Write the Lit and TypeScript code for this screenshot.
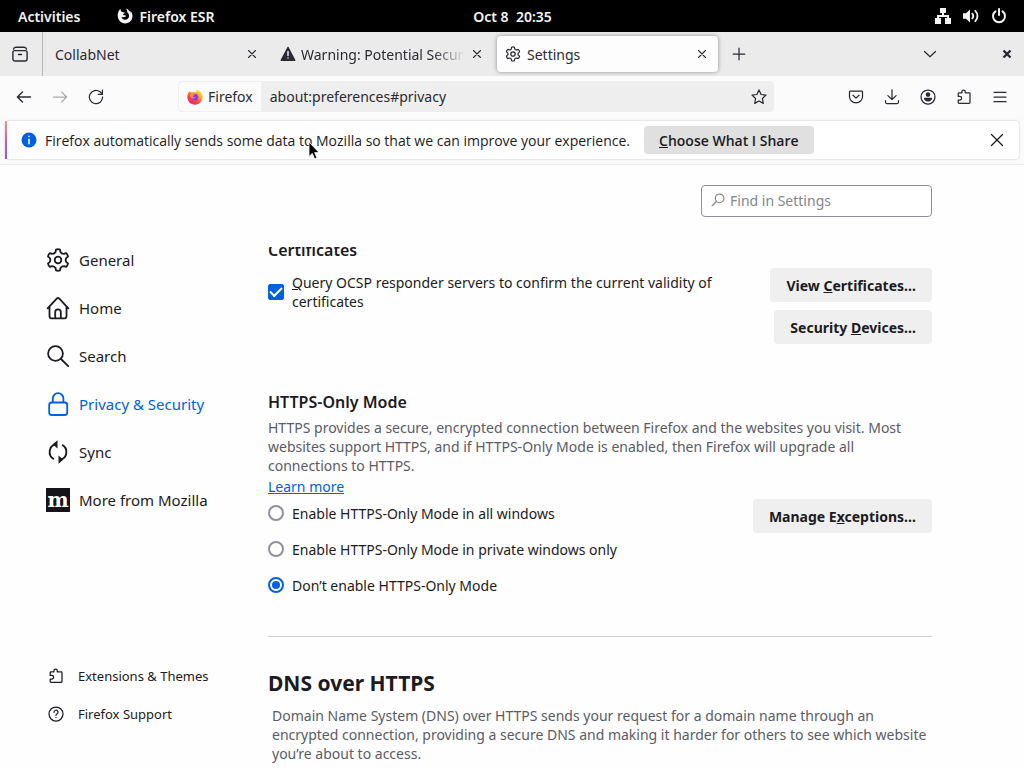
import { LitElement, html, css, svg } from "lit";
import { customElement, state } from "lit/decorators.js";

/* Outline of a six-tooth gear centred on (c, c). */
function gearPath(c: number, tip: number, root: number): string {
  const at = (deg: number, r: number) => {
    const a = (deg * Math.PI) / 180;
    return `${(c + r * Math.cos(a)).toFixed(2)} ${(c + r * Math.sin(a)).toFixed(2)}`;
  };
  let d = "";
  for (let k = 0; k < 6; k++) {
    const a = -90 + 60 * k;
    d += `${k === 0 ? "M" : "L"}${at(a - 16, root + 0.6)}L${at(a - 11, tip)}Q${at(a, tip + 0.6)} ${at(a + 11, tip)}L${at(a + 16, root + 0.6)}Q${at(a + 30, root - 1)} ${at(a + 44, root + 0.6)}`;
  }
  return d + "Z";
}

const svg16 = (body: unknown, size = 16) => html`<svg class="icon" width=${size} height=${size} viewBox="0 0 16 16" fill="none" stroke="currentColor" stroke-width="1.25" stroke-linecap="round" stroke-linejoin="round" aria-hidden="true">${body}</svg>`;
const svg24 = (body: unknown) => html`<svg class="icon" width="24" height="24" viewBox="0 0 24 24" fill="none" stroke="currentColor" stroke-width="1.8" stroke-linecap="round" stroke-linejoin="round" aria-hidden="true">${body}</svg>`;

const puzzle = svg`<path d="M2.200 7V4.600c0-.5.3-.8.8-.8h2.900V2.700a1.700 1.700 0 0 1 3.400 0v1.100h3.900c.5 0 .8.3.8.8v9c0 .5-.3.8-.8.8H3c-.5 0-.8-.3-.8-.8v-2.600h1.600a1.700 1.700 0 0 0 0-3.600H2.200"/>`;

const icons = {
  firefoxMono: svg16(svg`<path fill="currentColor" stroke="none" d="M3.300 1C1.500 2.600.6 4.900.7 7.700.900 12 4 15.400 8.200 15.400c4.200 0 7.300-3.300 7.300-7.400 0-2.500-1-4.400-2.400-5.600.5 1 .6 1.700.5 2.300C12.600 2.600 10.700 1.200 9 .6c1 1.300 1.300 2.300 1.200 3.700 1.300 1 2 2.300 1.800 4-.2 2.200-1.900 3.600-4 3.500-2-.1-3.400-1.500-3.500-3.100.8.7 1.800.8 2.700.3.7-.4 1.200-.5 1.700-.6.3-.5-.2-1.100-1-1.200C6.700 7.300 6 6.900 6.200 6.200c.2-.6 1.500-.8 1.600-1.600C6.900 4.300 6 4.200 4.900 4 4 3.200 3.500 2.200 3.300 1z"/>`),
  firefox: html`<svg class="icon" width="16" height="16" viewBox="0 0 16 16" aria-hidden="true">
    <defs>
      <linearGradient id="flame" x1="0.85" y1="0.05" x2="0.2" y2="0.95"><stop offset="0" stop-color="#fff04a"/><stop offset="0.35" stop-color="#ffa52e"/><stop offset="0.65" stop-color="#ff4b3a"/><stop offset="1" stop-color="#e8187c"/></linearGradient>
      <radialGradient id="globe"><stop offset="0" stop-color="#6a3df0"/><stop offset="1" stop-color="#a83ad8"/></radialGradient>
    </defs>
    <path fill="url(#flame)" d="M2.600 2.200C1.200 3.600.4 5.600.4 8c0 4.300 3.400 7.700 7.600 7.700s7.600-3.400 7.600-7.700c0-2.400-1-4.400-2.500-5.600C12 1.500 10.600.8 9.300.3c.4 1.300.1 2.100-.8 2.900C7 2.800 5.900 3 5 3.500 4 3.300 3.100 2.900 2.600 2.200z"/>
    <circle cx="7.900" cy="8.200" r="3.500" fill="url(#globe)"/>
    <path fill="#ff9a2e" d="M3 5.300c1.500-.9 3.200-.6 4.600.5-.2.900-1.700.9-1.900 1.700.5 1 1.900 1 3.200.5-.6 1.300-2.600 2-4.300 1C3.400 8.200 2.900 6.800 3 5.300z"/></svg>`,
  network: svg16(svg`<g fill="currentColor" stroke="none"><path d="M5 0h6v5H9v2h5v3h2v6h-6v-6h2V9H4v1h2v6H0v-6h2V7h5V5H5z"/></g>`),
  volume: svg16(svg`<path fill="currentColor" stroke="none" d="M0 5.200h3L7 1.400v13.200L3 10.800H0z"/><path stroke-width="1.800" d="M9.300 5.600c1.200 1.400 1.200 3.400 0 4.800M12.300 2.800c2.900 3 2.900 7.400 0 10.400"/>`),
  power: svg16(svg`<path stroke-width="2" d="M8 1v6M4.500 3.400a6 6 0 1 0 7 0"/>`),
  view: svg16(svg`<path stroke-width="1.400" d="M3.800 1.200h8.400c1.200 0 2 .8 2.200 2M3.800 1.200c-1.200 0-2 .8-2.200 2"/><rect x="0.900" y="4.600" width="14.200" height="10.400" rx="2" stroke-width="1.400"/><path d="M6.500 8.400h3" stroke-width="1.500"/>`),
  warning: svg16(svg`<path fill="currentColor" d="M8 1.500l6.700 12.800H1.300z" stroke-width="1.500"/><path stroke="#ebebeb" stroke-width="1.500" d="M8 5.500v4M8 12v.1"/>`),
  gear: svg16(svg`<path d="${gearPath(8, 6.9, 5.2)}"/><circle cx="8" cy="8" r="2.200"/>`),
  close: svg16(svg`<path d="M4 4l8 8M12 4l-8 8"/>`, 14),
  closeLarge: svg16(svg`<path d="M2.500 2.500l11 11M13.500 2.500l-11 11"/>`),
  closeWindow: svg16(svg`<path stroke-width="2.400" stroke-linecap="butt" d="M4.500 4.500l7 7M11.500 4.500l-7 7"/>`),
  plus: svg16(svg`<path d="M8 2.200v11.600M2.200 8h11.600"/>`),
  chevron: svg16(svg`<path d="M2.500 5.500L8 10.700l5.500-5.200"/>`),
  back: svg16(svg`<path stroke-width="1.400" d="M14.500 8h-13M6.500 2.900L1.400 8l5.100 5.100"/>`),
  forward: svg16(svg`<path d="M1.500 8h13M9.500 2.900L14.600 8l-5.100 5.100"/>`),
  reload: svg16(svg`<path d="M14.600 8A6.600 6.600 0 1 1 12 2.800l2.300 2.100M14.400 1.200V5.300H10.300"/>`),
  star: svg16(svg`<path d="M8 1l2.100 4.500 4.900.6-3.600 3.400.9 4.900L8 12l-4.300 2.400.9-4.900L1 6.100l4.900-.6z"/>`),
  pocket: svg16(svg`<path d="M2.500 2h11c.6 0 1 .4 1 1v4.600a6.500 6.300 0 0 1-13 0V3c0-.6.4-1 1-1zM5 6.200l3 2.900 3-2.900"/>`),
  download: svg16(svg`<path d="M8 .8v9.600M3.900 6.600L8 10.500l4.100-3.900M1.500 11.500v1.600c0 .9.600 1.500 1.500 1.500h10c.9 0 1.500-.6 1.500-1.500v-1.600"/>`),
  account: svg16(svg`<circle cx="8" cy="8" r="7"/><circle cx="8" cy="5.600" r="2.300" fill="currentColor" stroke="none"/><path fill="currentColor" stroke="none" d="M3.800 8.800h8.400c0 2.200-1.900 3.800-4.200 3.800S3.800 11 3.800 8.800z"/>`),
  puzzle: svg16(puzzle),
  menu: svg16(svg`<path d="M2 3.300h12M2 8h12M2 12.700h12"/>`),
  info: html`<svg class="icon" width="16" height="16" viewBox="0 0 16 16" aria-hidden="true"><circle cx="8" cy="8" r="7.500" fill="#0560df"/><path d="M8 7.300v4.500M8 4.300v.2" stroke="#fff" stroke-width="1.500" stroke-linecap="round"/></svg>`,
  find: svg16(svg`<circle cx="9.600" cy="6.300" r="4.300"/><path d="M6.400 9.500L2.200 13.700"/>`),
  gearLarge: svg24(svg`<path d="${gearPath(12, 10.6, 8)}"/><circle cx="12" cy="12" r="3.300"/>`),
  home: svg24(svg`<path d="M1.600 12.400L10.700 2.600c.7-.8 1.900-.8 2.600 0l9.100 9.800M3.500 10.800v9.400c0 1.200.9 2.100 2.100 2.100h12.800c1.200 0 2.100-.9 2.100-2.100v-9.400M9.200 22v-5.800a2.800 2.800 0 0 1 5.600 0V22"/>`),
  search: svg24(svg`<circle cx="9.500" cy="9.500" r="7.400"/><path d="M15 15l7.200 7.200"/>`),
  lock: svg24(svg`<rect x="3.200" y="10.500" width="18" height="12.500" rx="2.500"/><path d="M6.800 10.300V6.500a5.300 5.300 0 0 1 10.600 0v3.800"/>`),
  sync: svg24(svg`<path stroke-width="1.900" stroke-linecap="butt" d="M7.800 19.200A8.200 8.200 0 0 1 9.500 4.200M16.200 4.800A8.200 8.200 0 0 1 14.500 19.800"/><path fill="currentColor" stroke="none" d="M11.500.2v8.200L6.700 4.300zM12.500 15.600v8.200l4.800-4.100z"/>`),
  help: svg16(svg`<circle cx="8" cy="8" r="7"/><path d="M6 6.300a2 2 0 1 1 2.900 1.700c-.6.3-.9.700-.9 1.300M8 11.500v.1"/>`),
};

@customElement("app-root")
export class AppRoot extends LitElement {
  @state() private httpsMode = "off";

  static styles = css`
    :host {
      display: flex;
      flex-direction: column;
      height: 100vh;
      overflow: hidden;
      background: #fefefe;
      color: #1c1b22;
      font: 14px/19px "Noto Sans", "Open Sans", sans-serif;
    }
    * { box-sizing: border-box; }
    .icon { display: block; flex: none; }
    button, input { font: inherit; color: inherit; margin: 0; }
    button { border: 0; padding: 0; background: none; }
    a { color: inherit; text-decoration: none; }
    h1, h2, p { margin: 0; }

    .shell { display: grid; grid-template-columns: 1fr auto 1fr; align-items: center; height: 32px; padding: 0 17px 0 18px; background: #000; color: #f4f4f4; font-weight: 600; }
    .shell-left, .shell-right { display: flex; align-items: center; }
    .shell-left { gap: 37px; }
    .shell-right { justify-content: flex-end; gap: 12px; }
    .shell-app { display: flex; align-items: center; gap: 6px; }

    .tabs { display: flex; align-items: center; height: 44px; background: #ebebeb; padding-right: 9px; color: #2b2a33; }
    .view { display: flex; align-items: center; justify-content: center; width: 43px; height: 44px; border-right: 1px solid #b8b8b8; padding-right: 2px; margin-right: 1px; }
    .tab { display: flex; align-items: center; gap: 6px; flex: 0 1 225px; min-width: 0; height: 36px; padding: 0 10px 0 11px; }
    .tab.active { padding: 0 9px 0 8px; margin-left: 3px; flex-basis: 221px; border-radius: 4px; background: #fdfdfd; box-shadow: 0 0 4px rgba(0, 0, 0, 0.4); }
    .tab-title { flex: 1; min-width: 0; overflow: hidden; white-space: nowrap; }
    .tab-title.faded { -webkit-mask-image: linear-gradient(to left, transparent, #000 32px); mask-image: linear-gradient(to left, transparent, #000 32px); }
    .tab.overfull { gap: 5px; }
    .new-tab { margin-left: 13px; }
    .grow { flex: 1; }
    .tab-menu { margin-right: 61px; }

    .toolbar { display: flex; align-items: center; height: 41px; padding: 0 6px; background: #fbfbfb; color: #2b2a33; }
    .tool { display: flex; align-items: center; justify-content: center; width: 36px; height: 32px; }
    .tool.off { color: #aaa; }
    .urlbar { display: flex; align-items: center; flex: 1; min-width: 0; height: 31px; margin: 0 64px; border-radius: 4px; background: #eee; padding-right: 7px; }
    .identity { display: flex; align-items: center; gap: 5px; height: 31px; padding: 0 8px; border: 1px solid #f0f0f0; border-radius: 4px 0 0 4px; background: #fbfbfb; }
    .url { flex: 1; min-width: 0; border: 0; outline: 0; background: none; padding: 0 8px; }

    .notice-row { padding: 4px 5px 5px; background: #fafafa; border-bottom: 1px solid #e8e8e8; font-family: "Open Sans", "Noto Sans", sans-serif; }
    .notice { display: flex; align-items: center; height: 38px; padding: 0 14px; border-radius: 4px; background: #fff; box-shadow: 0 0 2px rgba(0, 0, 0, 0.25); border-left: 2px solid; border-image: linear-gradient(#f29a7c, #d25fa8, #9059c8) 1; }
    .notice p { margin: 0 14px 0 8px; white-space: nowrap; }
    .notice button { flex: none; }
    .share { height: 28px; padding: 0 15px; border-radius: 4px; background: #e0e0e0; font-weight: 600; }

    .page { display: grid; grid-template-columns: 222px minmax(0, 664px); column-gap: 46px; flex: 1; min-height: 0; }
    .side { display: flex; flex-direction: column; justify-content: space-between; padding: 71px 0 35px 46px; }
    .side nav { display: flex; flex-direction: column; }
    .cat { display: flex; align-items: center; gap: 9px; height: 48px; font-size: 15px; white-space: nowrap; }
    .cat.current { color: #0061e0; }
    .moz { display: flex; justify-content: center; width: 24px; height: 24px; background: #15141a; color: #fff; font: 700 20px/24px "DejaVu Serif", serif; }
    .side-link { display: flex; align-items: center; gap: 14px; height: 38px; padding-left: 2px; font-size: 13px; white-space: nowrap; }

    .pane { display: flex; flex-direction: column; min-height: 0; }
    .find-row { display: flex; justify-content: flex-end; padding: 20px 0 30px; }
    .find { display: flex; align-items: center; gap: 4px; width: 231px; height: 32px; padding: 0 8px 2px; border: 1px solid #8f8f9d; border-radius: 4px; background: #fff; color: #8a8a92; }
    .find input { flex: 1; min-width: 0; border: 0; outline: 0; padding: 0; background: none; }
    .find input::placeholder { color: #85858c; opacity: 1; }
    .scroll { flex: 1; min-height: 0; overflow: hidden; }
    .first { margin-top: -9px; }
    h2 { font-size: 16px; line-height: 24px; font-weight: 600; }
    .row { display: flex; justify-content: space-between; gap: 32px; }
    .certs { padding-top: 6px; }
    .check { display: flex; align-items: center; gap: 8px; width: 464px; height: 48px; }
    .check input, .radio input { appearance: none; flex: none; width: 16px; height: 16px; display: grid; place-items: center; }
    .check input { border: 1px solid #8f8f9d; border-radius: 2px; }
    .check input:checked { border-color: #0061e0; background: #0061e0; }
    .check input:checked::after { content: ""; width: 10px; height: 5px; margin-top: -4px; border: solid #fff; border-width: 0 0 2px 2px; transform: rotate(-45deg); }
    .stack { display: flex; flex-direction: column; align-items: flex-end; gap: 8px; }
    .btn { height: 34px; padding: 0 16px; border-radius: 4px; background: #efefef; font-weight: 700; white-space: nowrap; }
    .https { margin-top: 46px; }
    .note { color: #5b5b66; }
    .https .note { padding-top: 4px; }
    .learn { display: inline-block; margin-top: 2px; color: #0061e0; text-decoration: underline; }
    .modes { align-items: flex-start; padding-top: 3px; }
    .radios { display: flex; flex-direction: column; }
    .radio { display: flex; align-items: center; gap: 8px; height: 36px; }
    .radio:first-child { height: 28px; margin-bottom: 4px; }
    .radio input { border: 2px solid #8f8f9d; border-radius: 50%; background: #fff; }
    .radio input:checked { border-color: #0061e0; }
    .radio input:checked::after { content: ""; width: 8px; height: 8px; border-radius: 50%; background: #0061e0; }
    .dns { margin-top: 33px; border-top: 1px solid #cfcfd4; padding-top: 30px; }
    h1 { font-size: 21px; line-height: 32px; font-weight: 700; }
    .dns .note { padding: 7px 0 0 4px; }
    .pointer { position: absolute; left: 308px; top: 141px; }
  `;

  private mode(value: string, label: string) {
    return html`<label class="radio"><input type="radio" name="https" .checked=${this.httpsMode === value} @change=${() => (this.httpsMode = value)} />${label}</label>`;
  }

  render() {
    return html`
      <header class="shell">
        <div class="shell-left"><span>Activities</span><span class="shell-app">${icons.firefoxMono}Firefox ESR</span></div>
        <span>Oct 8&nbsp; 20:35</span>
        <div class="shell-right">${icons.network}${icons.volume}${icons.power}</div>
      </header>

      <div class="tabs">
        <button class="view" aria-label="Firefox View">${icons.view}</button>
        <div class="tab"><span class="tab-title">CollabNet</span><button aria-label="Close tab">${icons.close}</button></div>
        <div class="tab overfull">${icons.warning}<span class="tab-title faded">Warning: Potential Security</span><button aria-label="Close tab">${icons.close}</button></div>
        <div class="tab active">${icons.gear}<span class="tab-title">Settings</span><button aria-label="Close tab">${icons.close}</button></div>
        <button class="new-tab" aria-label="New tab">${icons.plus}</button>
        <span class="grow"></span>
        <button class="tab-menu" aria-label="List all tabs">${icons.chevron}</button>
        <button aria-label="Close window">${icons.closeWindow}</button>
      </div>

      <div class="toolbar">
        <button class="tool" aria-label="Back">${icons.back}</button>
        <button class="tool off" aria-label="Forward" disabled>${icons.forward}</button>
        <button class="tool" aria-label="Reload">${icons.reload}</button>
        <div class="urlbar">
          <span class="identity">${icons.firefox}Firefox</span>
          <input class="url" type="text" aria-label="Address" .value=${"about:preferences#privacy"} />
          <button aria-label="Bookmark this page">${icons.star}</button>
        </div>
        <button class="tool" aria-label="Save to Pocket">${icons.pocket}</button>
        <button class="tool" aria-label="Downloads">${icons.download}</button>
        <button class="tool" aria-label="Account">${icons.account}</button>
        <button class="tool" aria-label="Extensions">${icons.puzzle}</button>
        <button class="tool" aria-label="Menu">${icons.menu}</button>
      </div>

      <div class="notice-row">
        <div class="notice">
          ${icons.info}
          <p>Firefox automatically sends some data to Mozilla so that we can improve your experience.</p>
          <button class="share"><u>C</u>hoose What I Share</button>
          <span class="grow"></span>
          <button aria-label="Dismiss">${icons.closeLarge}</button>
        </div>
      </div>

      <main class="page">
        <aside class="side">
          <nav>
            <a class="cat" href="#general">${icons.gearLarge}General</a>
            <a class="cat" href="#home">${icons.home}Home</a>
            <a class="cat" href="#search">${icons.search}Search</a>
            <a class="cat current" href="#privacy">${icons.lock}Privacy &amp; Security</a>
            <a class="cat" href="#sync">${icons.sync}Sync</a>
            <a class="cat" href="#more"><span class="moz" aria-hidden="true">m</span>More from Mozilla</a>
          </nav>
          <nav>
            <a class="side-link" href="#addons">${icons.puzzle}Extensions &amp; Themes</a>
            <a class="side-link" href="#support">${icons.help}Firefox Support</a>
          </nav>
        </aside>

        <div class="pane">
          <div class="find-row">
            <label class="find">${icons.find}<input type="text" placeholder="Find in Settings" aria-label="Find in Settings" /></label>
          </div>
          <div class="scroll">
            <section class="first">
              <h2>Certificates</h2>
              <div class="row certs">
                <label class="check"><input type="checkbox" checked /><span><u>Q</u>uery OCSP responder servers to confirm the current validity of certificates</span></label>
                <div class="stack">
                  <button class="btn">View <u>C</u>ertificates…</button>
                  <button class="btn">Security <u>D</u>evices…</button>
                </div>
              </div>
            </section>
            <section class="https">
              <h2>HTTPS-Only Mode</h2>
              <p class="note">HTTPS provides a secure, encrypted connection between Firefox and the websites you visit. Most websites support HTTPS, and if HTTPS-Only Mode is enabled, then Firefox will upgrade all connections to HTTPS.</p>
              <a class="learn" href="#learn">Learn more</a>
              <div class="row modes">
                <div class="radios">
                  ${this.mode("all", "Enable HTTPS-Only Mode in all windows")}
                  ${this.mode("private", "Enable HTTPS-Only Mode in private windows only")}
                  ${this.mode("off", "Don’t enable HTTPS-Only Mode")}
                </div>
                <button class="btn">Manage E<u>x</u>ceptions…</button>
              </div>
            </section>
            <section class="dns">
              <h1>DNS over HTTPS</h1>
              <p class="note">Domain Name System (DNS) over HTTPS sends your request for a domain name through an encrypted connection, providing a secure DNS and making it harder for others to see which website you’re about to access.</p>
            </section>
          </div>
        </div>
      </main>

      <svg class="pointer" width="12" height="19" viewBox="0 0 12 19" aria-hidden="true"><path d="M1 1v14.500l3.300-3.100 2.300 5.400 2.300-1-2.300-5.200H11z" fill="#000" stroke="#fff" stroke-width="0.800"/></svg>
    `;
  }
}
